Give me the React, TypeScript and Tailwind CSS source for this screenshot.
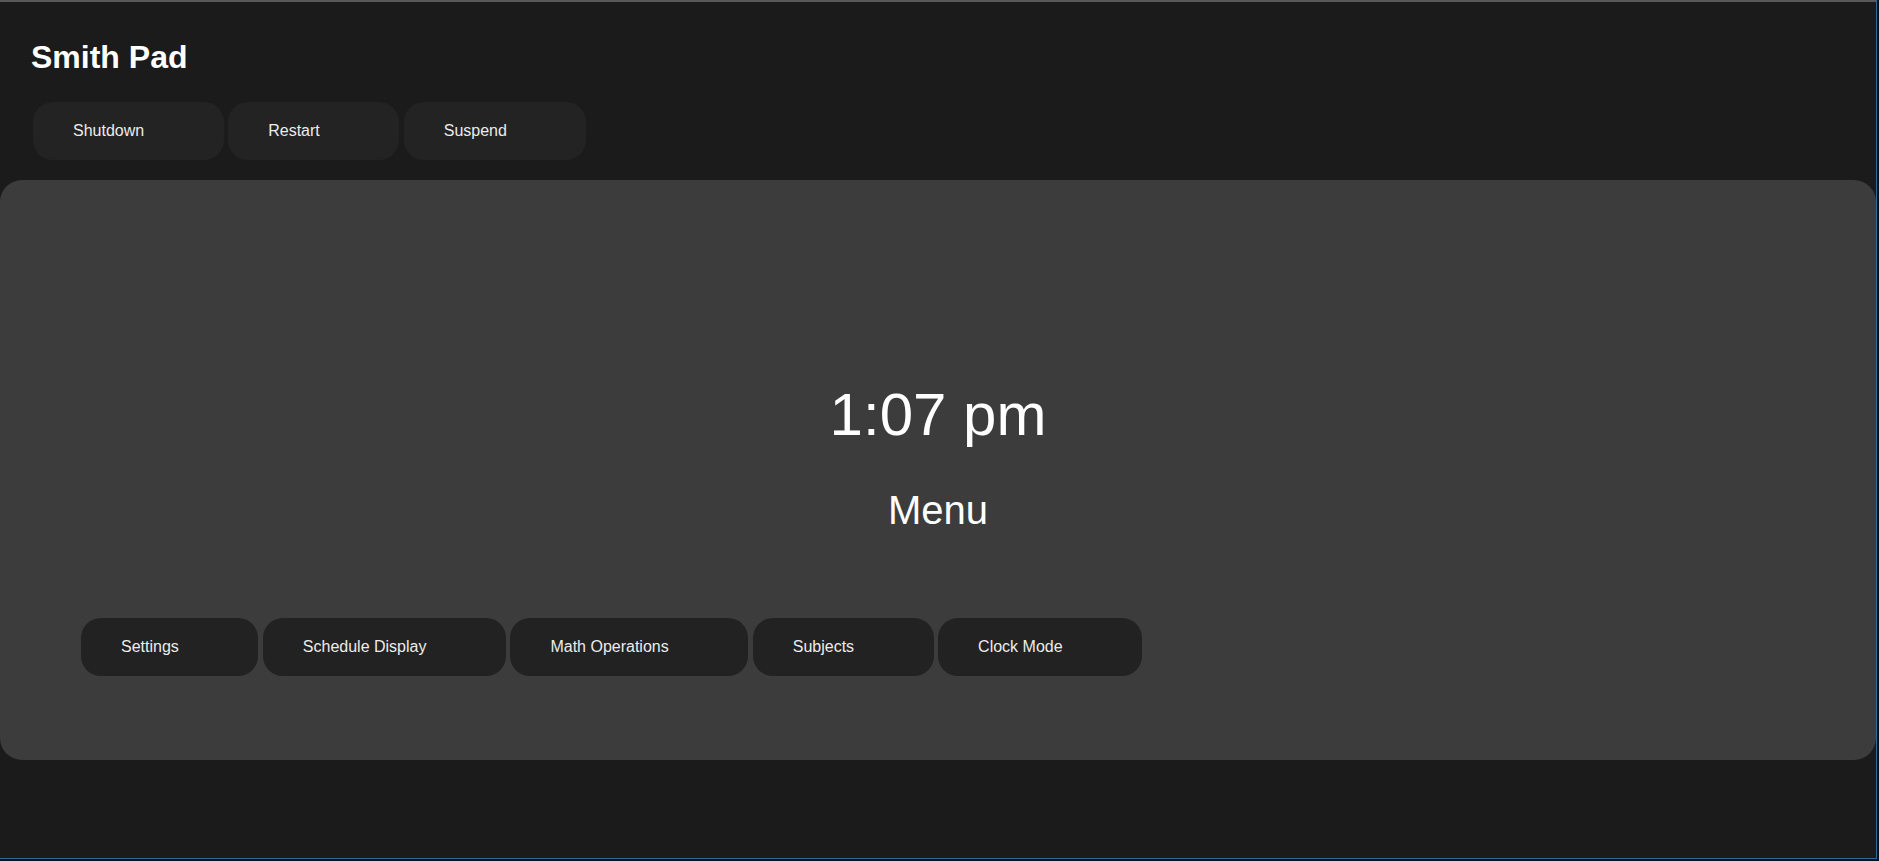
import React from "react";

const topButtons = ["Shutdown", "Restart", "Suspend"];
const menuButtons = ["Settings", "Schedule Display", "Math Operations", "Subjects", "Clock Mode"];

function Btn({ label, dark }: { label: string; dark?: boolean }) {
  return (
    <button
      className={`${dark ? "bg-[#222222]" : "bg-[#232323]"} text-[#ececec] text-[16px] leading-[18px] pl-[40px] pr-[79.5px] py-[20px] rounded-[20px] text-left whitespace-nowrap`}
    >
      {label}
    </button>
  );
}

export default function App() {
  return (
    <div
      className="w-[1879px] h-[861px] bg-[#07121d] overflow-hidden"
      style={{ fontFamily: '"Liberation Sans", Arial, sans-serif' }}
    >
      <div className="w-[1877px] h-[859px] bg-[#1b1b1b] border-t-2 border-t-[#5a5a5a] border-r border-r-[#2b6a9c] border-b border-b-[#2b6a9c] flex flex-col">
        <h1 className="pl-[31px] pt-[37px] text-[32px] leading-[37px] font-bold text-white">Smith Pad</h1>
        <div className="flex gap-[4.5px] pl-[33px] mt-[26px]">
          {topButtons.map((b) => (
            <Btn key={b} label={b} />
          ))}
        </div>
        <div className="mt-[20px] h-[580px] bg-[#3c3c3c] rounded-[22px] flex flex-col pt-[200px]">
          <div className="text-center text-white text-[60px] leading-[69px]">1:07 pm</div>
          <div className="text-center text-white text-[40px] leading-[46px] mt-[38px]">Menu</div>
          <div className="flex gap-[4.5px] pl-[81px] mt-[85px]">
            {menuButtons.map((b) => (
              <Btn key={b} label={b} dark />
            ))}
          </div>
        </div>
      </div>
    </div>
  );
}
